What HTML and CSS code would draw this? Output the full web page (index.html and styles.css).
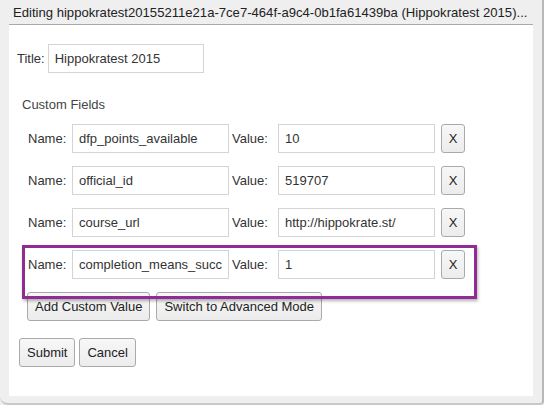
FILE: index.html
```html
<!DOCTYPE html>
<html>
<head>
<meta charset="utf-8">
<link rel="stylesheet" href="styles.css">
</head>
<body>
<div class="window">
  <div class="header">Editing hippokratest20155211e21a-7ce7-464f-a9c4-0b1fa61439ba (Hippokratest 2015)...</div>
  <div class="content">
    <div class="title-row">
      <span class="lbl">Title:</span>
      <input class="inp title-inp" type="text" value="Hippokratest 2015">
    </div>
    <div class="section">Custom Fields</div>
    <div class="fields">
      <div class="row">
        <span class="name-lbl">Name:</span>
        <input class="inp" type="text" value="dfp_points_available">
        <span class="val-lbl">Value:</span>
        <input class="inp" type="text" value="10">
        <button class="btn x">X</button>
      </div>
      <div class="row">
        <span class="name-lbl">Name:</span>
        <input class="inp" type="text" value="official_id">
        <span class="val-lbl">Value:</span>
        <input class="inp" type="text" value="519707">
        <button class="btn x">X</button>
      </div>
      <div class="row">
        <span class="name-lbl">Name:</span>
        <input class="inp" type="text" value="course_url">
        <span class="val-lbl">Value:</span>
        <input class="inp" type="text" value="http://hippokrate.st/">
        <button class="btn x">X</button>
      </div>
      <div class="row">
        <span class="name-lbl">Name:</span>
        <input class="inp" type="text" value="completion_means_success">
        <span class="val-lbl">Value:</span>
        <input class="inp" type="text" value="1">
        <button class="btn x">X</button>
      </div>
      <div class="highlight"></div>
    </div>
    <div class="actions">
      <button class="btn">Add Custom Value</button>
      <button class="btn">Switch to Advanced Mode</button>
    </div>
    <div class="submit-row">
      <button class="btn">Submit</button>
      <button class="btn">Cancel</button>
    </div>
  </div>
</div>
</body>
</html>
```
FILE: styles.css
```css
* { box-sizing: border-box; }
html, body { margin: 0; padding: 0; }
body {
  background: #efefef;
  font-family: "Liberation Sans", Arial, sans-serif;
  font-size: 13px;
  color: #333;
}
.window {
  width: 544px;
  height: 405px;
  background: #efefef;
  border-right: 2px solid #b8b8b8;
  border-bottom: 2px solid #c8c8c8;
  border-bottom-left-radius: 8px;
  border-bottom-right-radius: 4px;
  overflow: hidden;
}
.header {
  height: 25px;
  margin-left: 9px;
  width: 524px;
  padding-left: 4px;
  padding-top: 5px;
  border-bottom: 1px solid #aaa;
  color: #222;
  font-size: 13.1px;
  white-space: nowrap;
  overflow: hidden;
}
.content {
  margin-left: 9px;
  width: 524px;
  height: 371px;
  background: #fff;
  padding-top: 19px;
}
.title-row {
  display: flex;
  align-items: center;
  gap: 3px;
  padding-left: 8px;
}
.lbl { color: #333; }
.inp {
  height: 29px;
  width: 157px;
  border: 1px solid #d4d4d4;
  padding: 0 6px;
  font-family: "Liberation Sans", Arial, sans-serif;
  font-size: 13px;
  color: #333;
  background: #fff;
  margin: 0;
  outline: none;
}
.title-inp { width: 156px; }
.section {
  margin-top: 24px;
  padding-left: 13px;
  color: #444;
  font-size: 13px;
}
.fields {
  position: relative;
  margin-top: 12px;
  padding-left: 19px;
}
.row {
  display: flex;
  align-items: center;
  height: 29px;
  margin-bottom: 13px;
}
.name-lbl { width: 44px; }
.val-lbl { width: 49px; padding-left: 3px; }
.btn {
  height: 29px;
  border: 1px solid #aaa;
  border-radius: 3px;
  background: linear-gradient(#f7f7f7, #ececec);
  font-family: "Liberation Sans", Arial, sans-serif;
  font-size: 13px;
  color: #222;
  padding: 0 7px;
  margin: 0;
}
.x { width: 24px; margin-left: 6px; padding: 0; }
.highlight {
  position: absolute;
  left: 13px;
  top: 121px;
  width: 455px;
  height: 54px;
  border: 3px solid #902c94;
  box-shadow: 1px 2px 3px rgba(0,0,0,0.3);
  pointer-events: none;
}
.actions {
  display: flex;
  gap: 6px;
  padding-left: 18px;
  margin-top: 13px;
}
.submit-row {
  display: flex;
  gap: 4px;
  padding-left: 10px;
  margin-top: 17px;
}
```
